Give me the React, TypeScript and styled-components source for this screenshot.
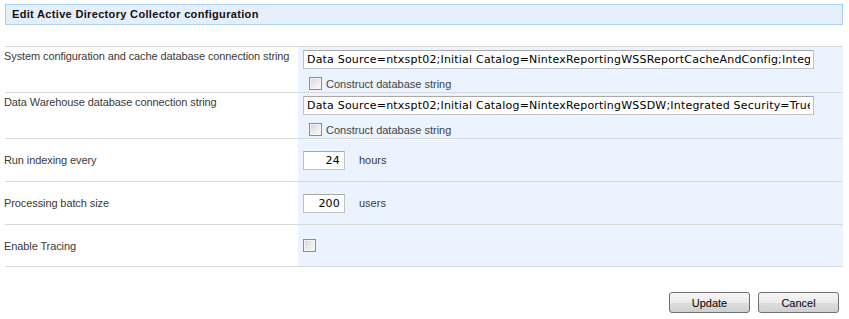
import React from 'react'
import styled, { createGlobalStyle } from 'styled-components'

const GlobalStyle = createGlobalStyle`
  html, body { margin: 0; padding: 0; background: #fff; }
  body { font-family: "Liberation Sans", Arial, sans-serif; font-size: 11px; color: #333; }
`

const Page = styled.div`
  width: 849px;
  padding: 4px 6px 0 4px;
  box-sizing: border-box;
`

const Header = styled.div`
  margin-left: 1px;
  height: 19px;
  line-height: 19px;
  border: 1px solid #a9cff3;
  background: #e5effc;
  padding-left: 6px;
  font-weight: bold;
  font-size: 11px;
  letter-spacing: 0.33px;
  color: #111;
`

const Form = styled.div`
  margin-top: 21px;
  margin-left: 1px;
  border-top: 1px solid #d8d8d8;
`

const Row = styled.div<{ $h: number }>`
  display: grid;
  grid-template-columns: 293px 1fr;
  height: ${p => p.$h}px;
  border-bottom: 1px solid #d8d8d8;
`

const Label = styled.div<{ $top?: boolean }>`
  display: flex;
  align-items: ${p => (p.$top ? 'flex-start' : 'center')};
  padding-top: ${p => (p.$top ? '3px' : '0')};
  margin-left: -1px;
  letter-spacing: -0.1px;
  color: #3a3a3a;
`

const Control = styled.div<{ $top?: boolean }>`
  background: #ebf3fe;
  padding: ${p => (p.$top ? '3px 0 0 5px' : '0 0 0 5px')};
  display: flex;
  flex-direction: ${p => (p.$top ? 'column' : 'row')};
  align-items: ${p => (p.$top ? 'flex-start' : 'center')};
`

const TextBox = styled.input`
  width: 511px;
  height: 19px;
  box-sizing: border-box;
  border: 1px solid #c2c2c2;
  border-top-color: #a9a9a9;
  background: #fff;
  padding: 0 3px;
  font-family: "DejaVu Sans", Verdana, sans-serif;
  font-size: 11px;
  letter-spacing: 0.2px;
  color: #000;
  outline: none;
`

const NumberBox = styled(TextBox)`
  width: 42px;
  text-align: right;
  padding-right: 4px;
`

const Unit = styled.span`
  margin-left: 14px;
  color: #3a3a3a;
`

const CheckLine = styled.label`
  display: flex;
  align-items: center;
  margin: 8px 0 0 6px;
  color: #444;
`

const Check = styled.input.attrs({ type: 'checkbox' })`
  appearance: none;
  margin: 0;
  width: 13px;
  height: 13px;
  box-sizing: border-box;
  border: 1px solid #8d8d8d;
  background: linear-gradient(135deg, #d4d4d4 0%, #ececec 55%, #fafafa 100%);
  box-shadow: inset 0 0 0 1px #f4f4f4;
`

const CheckText = styled.span`
  margin-left: 4px;
`

const Buttons = styled.div`
  display: flex;
  justify-content: flex-end;
  gap: 8px;
  margin-top: 25px;
  padding-right: 4px;
`

const Button = styled.button`
  width: 81px;
  height: 21px;
  border: 1px solid #707070;
  border-radius: 3px;
  background: linear-gradient(#f6f6f6 0%, #ebebeb 50%, #dddddd 51%, #cfcfcf 100%);
  font-family: "Liberation Sans", Arial, sans-serif;
  font-size: 11px;
  color: #000;
  padding: 0;
`

export default function App() {
  return (
    <Page>
      <GlobalStyle />
      <Header>Edit Active Directory Collector configuration</Header>
      <Form>
        <Row $h={45}>
          <Label $top>System configuration and cache database connection string</Label>
          <Control $top>
            <TextBox readOnly value="Data Source=ntxspt02;Initial Catalog=NintexReportingWSSReportCacheAndConfig;Integrated Security=True" />
            <CheckLine>
              <Check />
              <CheckText>Construct database string</CheckText>
            </CheckLine>
          </Control>
        </Row>
        <Row $h={45}>
          <Label $top>Data Warehouse database connection string</Label>
          <Control $top>
            <TextBox readOnly value="Data Source=ntxspt02;Initial Catalog=NintexReportingWSSDW;Integrated Security=True" />
            <CheckLine>
              <Check />
              <CheckText>Construct database string</CheckText>
            </CheckLine>
          </Control>
        </Row>
        <Row $h={42}>
          <Label>Run indexing every</Label>
          <Control>
            <NumberBox readOnly value="24" />
            <Unit>hours</Unit>
          </Control>
        </Row>
        <Row $h={42}>
          <Label>Processing batch size</Label>
          <Control>
            <NumberBox readOnly value="200" />
            <Unit>users</Unit>
          </Control>
        </Row>
        <Row $h={41}>
          <Label>Enable Tracing</Label>
          <Control>
            <Check />
          </Control>
        </Row>
      </Form>
      <Buttons>
        <Button>Update</Button>
        <Button>Cancel</Button>
      </Buttons>
    </Page>
  )
}
